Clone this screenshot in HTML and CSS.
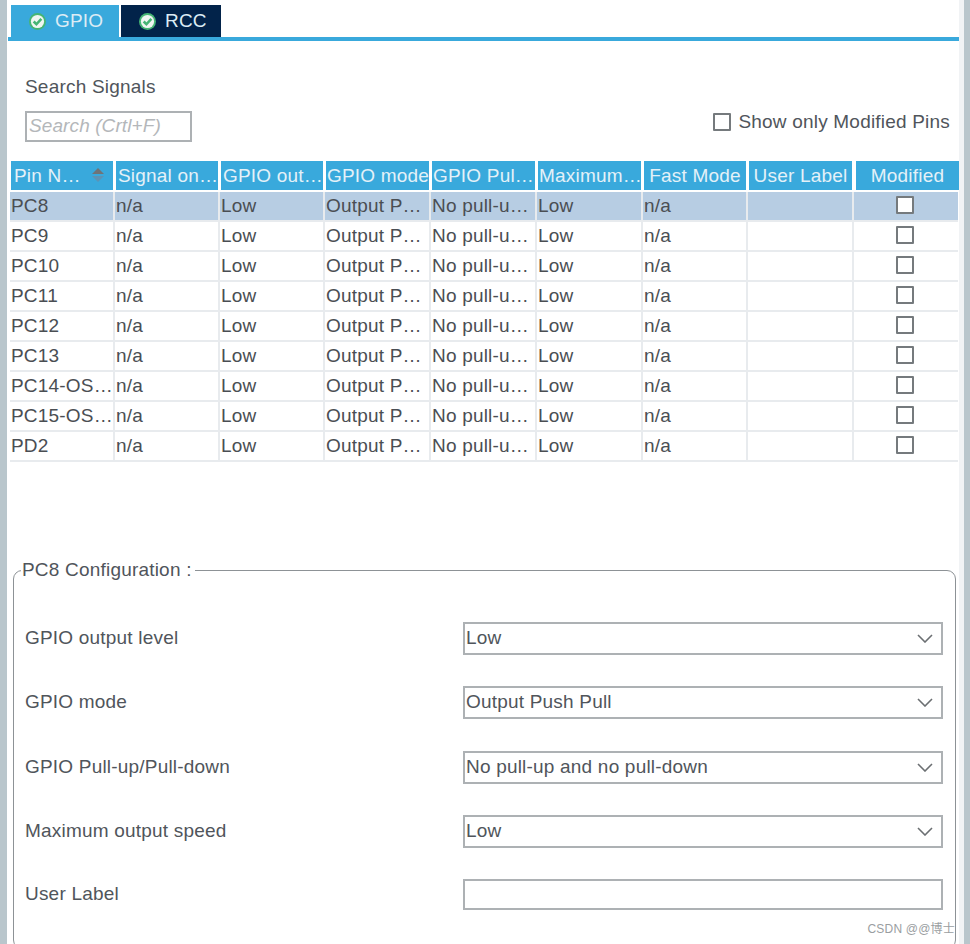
FILE: index.html
```html
<!DOCTYPE html>
<html lang="en">
<head>
<meta charset="utf-8">
<title>GPIO Configuration</title>
<link rel="stylesheet" href="styles.css">
</head>
<body>
<div class="app">
  <div class="rail-left"></div>
  <main class="panel">
    <nav class="tabs">
      <div class="tab tab-active">
        <svg class="tab-icon" viewBox="0 0 16 16"><circle cx="8" cy="8" r="8" fill="#46b574"/><circle cx="8" cy="8" r="6.2" fill="#f0f6f2"/><path d="M4.4 8 7 10.6 11.6 5.6" fill="none" stroke="#46b574" stroke-width="2.4"/></svg>
        <span>GPIO</span>
      </div>
      <div class="tab tab-dark">
        <svg class="tab-icon" viewBox="0 0 16 16"><circle cx="8" cy="8" r="8" fill="#46b574"/><circle cx="8" cy="8" r="6.2" fill="#f0f6f2"/><path d="M4.4 8 7 10.6 11.6 5.6" fill="none" stroke="#46b574" stroke-width="2.4"/></svg>
        <span>RCC</span>
      </div>
    </nav>
    <div class="tab-line"></div>

    <section class="search-bar">
      <div class="search-group">
        <label class="search-label">Search Signals</label>
        <input class="search-input" type="text" placeholder="Search (Crtl+F)">
      </div>
      <label class="show-modified"><input class="check" type="checkbox"><span>Show only Modified Pins</span></label>
    </section>

    <div class="pin-table">
      <div class="head-row">
        <div class="th th-left th-sort"><span>Pin N…</span>
          <svg class="sort" viewBox="0 0 14 16"><path d="M7 1 13 7H1Z" fill="#6f7478"/><path d="M7 15 1 9H13Z" fill="#5d93b4"/></svg>
        </div>
        <div class="th th-left th-mid">Signal on…</div>
        <div class="th th-left th-mid">GPIO out…</div>
        <div class="th th-left th-tight">GPIO mode</div>
        <div class="th th-left th-tight">GPIO Pul…</div>
        <div class="th th-left th-tight">Maximum…</div>
        <div class="th">Fast Mode</div>
        <div class="th">User Label</div>
        <div class="th th-last">Modified</div>
      </div>
      <div class="row row-selected"><div class="td">PC8</div><div class="td">n/a</div><div class="td">Low</div><div class="td">Output P…</div><div class="td">No pull-u…</div><div class="td">Low</div><div class="td">n/a</div><div class="td"></div><div class="td td-c"><input class="check" type="checkbox"></div></div>
      <div class="row"><div class="td">PC9</div><div class="td">n/a</div><div class="td">Low</div><div class="td">Output P…</div><div class="td">No pull-u…</div><div class="td">Low</div><div class="td">n/a</div><div class="td"></div><div class="td td-c"><input class="check" type="checkbox"></div></div>
      <div class="row"><div class="td">PC10</div><div class="td">n/a</div><div class="td">Low</div><div class="td">Output P…</div><div class="td">No pull-u…</div><div class="td">Low</div><div class="td">n/a</div><div class="td"></div><div class="td td-c"><input class="check" type="checkbox"></div></div>
      <div class="row"><div class="td">PC11</div><div class="td">n/a</div><div class="td">Low</div><div class="td">Output P…</div><div class="td">No pull-u…</div><div class="td">Low</div><div class="td">n/a</div><div class="td"></div><div class="td td-c"><input class="check" type="checkbox"></div></div>
      <div class="row"><div class="td">PC12</div><div class="td">n/a</div><div class="td">Low</div><div class="td">Output P…</div><div class="td">No pull-u…</div><div class="td">Low</div><div class="td">n/a</div><div class="td"></div><div class="td td-c"><input class="check" type="checkbox"></div></div>
      <div class="row"><div class="td">PC13</div><div class="td">n/a</div><div class="td">Low</div><div class="td">Output P…</div><div class="td">No pull-u…</div><div class="td">Low</div><div class="td">n/a</div><div class="td"></div><div class="td td-c"><input class="check" type="checkbox"></div></div>
      <div class="row"><div class="td">PC14-OS…</div><div class="td">n/a</div><div class="td">Low</div><div class="td">Output P…</div><div class="td">No pull-u…</div><div class="td">Low</div><div class="td">n/a</div><div class="td"></div><div class="td td-c"><input class="check" type="checkbox"></div></div>
      <div class="row"><div class="td">PC15-OS…</div><div class="td">n/a</div><div class="td">Low</div><div class="td">Output P…</div><div class="td">No pull-u…</div><div class="td">Low</div><div class="td">n/a</div><div class="td"></div><div class="td td-c"><input class="check" type="checkbox"></div></div>
      <div class="row"><div class="td">PD2</div><div class="td">n/a</div><div class="td">Low</div><div class="td">Output P…</div><div class="td">No pull-u…</div><div class="td">Low</div><div class="td">n/a</div><div class="td"></div><div class="td td-c"><input class="check" type="checkbox"></div></div>
    </div>

    <fieldset class="config">
      <legend class="config-title">PC8 Configuration :</legend>
      <div class="field field-first"><span class="field-label">GPIO output level</span>
        <div class="select"><span>Low</span><svg class="chev" viewBox="0 0 16 9"><path d="M1 1 8 8 15 1" fill="none" stroke="#6b6f72" stroke-width="1.6"/></svg></div></div>
      <div class="field"><span class="field-label">GPIO mode</span>
        <div class="select"><span>Output Push Pull</span><svg class="chev" viewBox="0 0 16 9"><path d="M1 1 8 8 15 1" fill="none" stroke="#6b6f72" stroke-width="1.6"/></svg></div></div>
      <div class="field field-third"><span class="field-label">GPIO Pull-up/Pull-down</span>
        <div class="select"><span>No pull-up and no pull-down</span><svg class="chev" viewBox="0 0 16 9"><path d="M1 1 8 8 15 1" fill="none" stroke="#6b6f72" stroke-width="1.6"/></svg></div></div>
      <div class="field"><span class="field-label">Maximum output speed</span>
        <div class="select"><span>Low</span><svg class="chev" viewBox="0 0 16 9"><path d="M1 1 8 8 15 1" fill="none" stroke="#6b6f72" stroke-width="1.6"/></svg></div></div>
      <div class="field field-user"><span class="field-label">User Label</span>
        <input class="text-input" type="text"></div>
    </fieldset>
    <div class="watermark">CSDN @@博士</div>
  </main>
  <div class="rail-gap"></div>
  <div class="rail-right"></div>
</div>
</body>
</html>
```

FILE: styles.css
```css
* { box-sizing: border-box; }
html, body { margin: 0; height: 100%; overflow: hidden; background: #fff; }
body { font-family: "Liberation Sans", Arial, sans-serif; font-size: 19px; letter-spacing: .2px; color: #50555b; }
.app { display: flex; width: 970px; height: 944px; overflow: hidden; }
.rail-left { width: 7px; background: #b9c6cc; flex: none; }
.panel { position: relative; width: 952px; flex: none; padding: 0 0 0 1px; background: #fff; }
.rail-gap { width: 5px; background: #f1f3f5; flex: none; }
.rail-right { width: 6px; background: #b9c6cc; flex: none; }

.tabs { display: flex; gap: 2px; padding: 5px 0 0 3px; height: 37px; }
.tab { display: flex; align-items: center; height: 32px; color: #dcecf5; }
.tab-active { width: 108px; padding-left: 18px; background: #39a9dc; }
.tab-dark { width: 100px; padding-left: 18px; background: #02234a; }
.tab-icon { width: 17px; height: 17px; margin-right: 9px; flex: none; }
.tab-line { height: 4px; background: #39a9dc; }

.search-bar { display: flex; justify-content: space-between; height: 120px; padding: 0 9px 0 17px; }
.search-group { display: flex; flex-direction: column; padding-top: 35px; }
.search-label { line-height: 22px; height: 22px; }
.search-input { width: 167px; height: 31px; margin-top: 13px; padding: 0 2px 2px; border: 2px solid #adb1b4; font: italic 19px "Liberation Sans", Arial, sans-serif; letter-spacing: .1px; background: #fff; outline: none; }
.search-input::placeholder { color: #b4b7ba; opacity: 1; }
.show-modified { display: flex; align-items: center; gap: 7px; height: 22px; margin-top: 70px; }
.check { appearance: none; -webkit-appearance: none; width: 18px; height: 18px; margin: 0; border: 2px solid #757a7d; background: #fff; flex: none; border-radius: 1px; }

.pin-table { margin: 0 0 0 2px; width: 948px; }
.head-row, .row { display: grid; grid-template-columns: 105px 105px 105px 106px 106px 106px 105px 106px 104px; }
.head-row { height: 30px; padding-left: 1px; }
.th { display: flex; align-items: center; justify-content: center; height: 29px; padding-top: 1px; margin-right: 3px; background: #39a9dc; color: #e4f1f8; white-space: nowrap; overflow: hidden; }
.th-left { justify-content: flex-start; padding-left: 3px; }
.th-mid { padding-left: 2px; }
.th-tight { padding-left: 1px; }
.th-sort { justify-content: space-between; padding-right: 8px; }
.th-last { margin-right: 0; margin-left: 1px; }
.sort { width: 14px; height: 16px; margin-bottom: 3px; }
.row { height: 30px; border-bottom: 2px solid #e8ebee; }
.row-selected { background: #b7cde3; margin-top: 1px; }
.td { display: flex; align-items: center; padding: 0 0 0 1px; height: 28px; border-right: 2px solid #e8ebee; white-space: nowrap; overflow: hidden; color: #4a4e53; }
.td:last-child { border-right: 0; }
.td-c { justify-content: center; padding: 0 2px 2px 0; }

.config { margin: 97px 0 0 5px; padding: 0; width: 943px; height: 390px; border: 1px solid #8d9296; border-radius: 9px; }
.config-title { margin-left: 7px; padding: 0 3px 0 1px; line-height: 22px; }
.field { display: flex; align-items: center; height: 32px; margin: 0 12px 32px 11px; }
.field-first { margin-top: 41px; }
.field-third { margin-top: 33px; }
.field-user .field-label { padding-bottom: 2px; }
.field-label { width: 438px; flex: none; }
.select { display: flex; align-items: center; justify-content: space-between; flex: 1; height: 33px; padding: 0 8px 0 1px; border: 2px solid #adb1b4; background: #fff; }
.chev { width: 16px; height: 9px; }
.text-input { flex: 1; align-self: flex-start; height: 31px; border: 2px solid #adb1b4; background: #fff; outline: none; }
.watermark { position: absolute; right: 4px; top: 919px; font: 12px "Liberation Sans", "Noto Sans CJK SC", sans-serif; color: #9a9ea1; }
```
